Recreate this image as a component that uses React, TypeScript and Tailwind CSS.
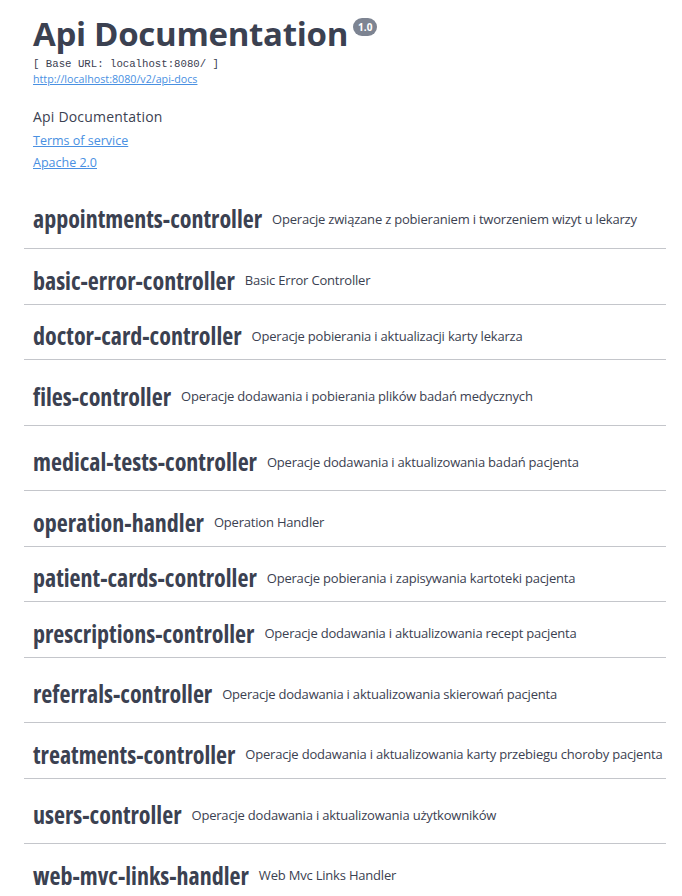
import React from 'react'

const tags = [
  { name: 'appointments-controller', desc: 'Operacje związane z pobieraniem i tworzeniem wizyt u lekarzy', h: 'h-[67px]' },
  { name: 'basic-error-controller', desc: 'Basic Error Controller', h: 'h-[56px]' },
  { name: 'doctor-card-controller', desc: 'Operacje pobierania i aktualizacji karty lekarza', h: 'h-[55px]' },
  { name: 'files-controller', desc: 'Operacje dodawania i pobierania plików badań medycznych', h: 'h-[66px]' },
  { name: 'medical-tests-controller', desc: 'Operacje dodawania i aktualizowania badań pacjenta', h: 'h-[65px]' },
  { name: 'operation-handler', desc: 'Operation Handler', h: 'h-[56px]' },
  { name: 'patient-cards-controller', desc: 'Operacje pobierania i zapisywania kartoteki pacjenta', h: 'h-[55px]' },
  { name: 'prescriptions-controller', desc: 'Operacje dodawania i aktualizowania recept pacjenta', h: 'h-[56px]' },
  { name: 'referrals-controller', desc: 'Operacje dodawania i aktualizowania skierowań pacjenta', h: 'h-[65px]' },
  { name: 'treatments-controller', desc: 'Operacje dodawania i aktualizowania karty przebiegu choroby pacjenta', h: 'h-[56px]' },
  { name: 'users-controller', desc: 'Operacje dodawania i aktualizowania użytkowników', h: 'h-[65px]' },
  { name: 'web-mvc-links-handler', desc: 'Web Mvc Links Handler', h: 'h-[56px]' },
]

export default function App() {
  return (
    <div className="min-h-[896px] bg-white pl-6 pr-4 text-[#3b4151] font-['Open_Sans',sans-serif]">
      <div className="pl-[9px] pt-[14px]">
        <div className="flex items-start">
          <h2 className="text-[33px] font-bold leading-[40px] tracking-[-0.3px]">Api Documentation</h2>
          <span className="ml-[5px] mt-[4px] rounded-full bg-[#7d8492] px-[5px] py-[2px] text-[10px] font-bold leading-[14px] text-white">
            1.0
          </span>
        </div>
        <div className="mt-[3px] font-['Liberation_Mono',monospace] text-[10.7px] leading-[14px]">[ Base URL: localhost:8080/ ]</div>
        <a href="#" className="block text-[10.7px] leading-[16px] text-[#4990e2] underline">
          http://localhost:8080/v2/api-docs
        </a>
        <p className="mt-[20px] text-[14px] leading-[20px] tracking-[0.2px]">Api Documentation</p>
        <a href="#" className="block mt-[4px] text-[12.5px] leading-[20px] text-[#4990e2] underline">
          Terms of service
        </a>
        <a href="#" className="block mt-[2px] text-[12.5px] leading-[20px] text-[#4990e2] underline">
          Apache 2.0
        </a>
      </div>
      <div className="mt-[9px]">
        {tags.map((t) => (
          <div key={t.name} className={`${t.h} flex items-center whitespace-nowrap border-b border-[#c4c6cb] pl-[9px] pt-2`}>
            <span className="shrink-0 font-['Open_Sans',sans-serif] text-[24px] font-bold leading-none [font-stretch:condensed]">
              {t.name}
            </span>
            <span className="ml-[10px] shrink-0 text-[13px] leading-none tracking-[-0.2px]">{t.desc}</span>
          </div>
        ))}
      </div>
    </div>
  )
}
